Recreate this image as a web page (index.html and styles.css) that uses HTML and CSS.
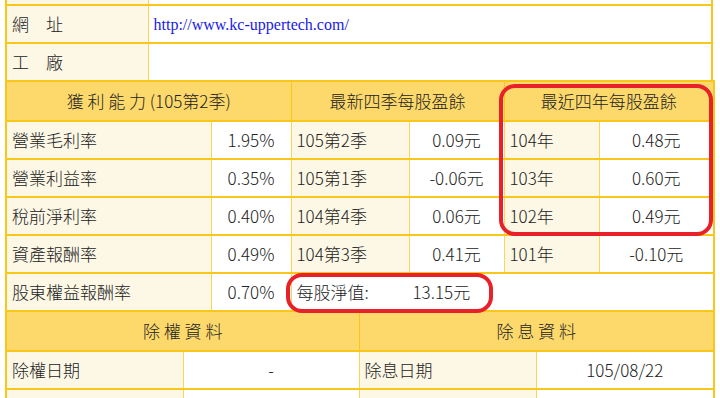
FILE: index.html
```html
<!DOCTYPE html>
<html lang="zh-Hant">
<head>
<meta charset="utf-8">
<title>公司資料</title>
<link rel="stylesheet" href="styles.css">
</head>
<body>
<div class="sheet">
  <table class="info">
    <colgroup><col class="c-lab"><col></colgroup>
    <tr class="stub"><td class="lab"></td><td class="val"></td></tr>
    <tr><td class="lab">網　址</td><td class="val"><span class="url">http://www.kc-uppertech.com/</span></td></tr>
    <tr><td class="lab">工　廠</td><td class="val"></td></tr>
  </table>

  <table class="fin">
    <colgroup>
      <col style="width:205px"><col style="width:80px"><col style="width:118px">
      <col style="width:95px"><col style="width:95px"><col style="width:115px">
    </colgroup>
    <tr class="head">
      <td colspan="2">獲 利 能 力 (105第2季)</td>
      <td colspan="2">最新四季每股盈餘</td>
      <td colspan="2">最近四年每股盈餘</td>
    </tr>
    <tr>
      <td class="lab">營業毛利率</td><td class="num">1.95%</td>
      <td class="lab">105第2季</td><td class="num">0.09元</td>
      <td class="lab">104年</td><td class="num">0.48元</td>
    </tr>
    <tr>
      <td class="lab">營業利益率</td><td class="num">0.35%</td>
      <td class="lab">105第1季</td><td class="num">-0.06元</td>
      <td class="lab">103年</td><td class="num">0.60元</td>
    </tr>
    <tr>
      <td class="lab">稅前淨利率</td><td class="num">0.40%</td>
      <td class="lab">104第4季</td><td class="num">0.06元</td>
      <td class="lab">102年</td><td class="num">0.49元</td>
    </tr>
    <tr>
      <td class="lab">資產報酬率</td><td class="num">0.49%</td>
      <td class="lab">104第3季</td><td class="num">0.41元</td>
      <td class="lab">101年</td><td class="num">-0.10元</td>
    </tr>
    <tr>
      <td class="lab">股東權益報酬率</td><td class="num">0.70%</td>
      <td class="plain" colspan="4"><span class="nav-label">每股淨值:</span><span class="nav-value">13.15元</span></td>
    </tr>
  </table>

  <table class="div">
    <colgroup>
      <col style="width:177px"><col style="width:176px"><col style="width:177px"><col style="width:178px">
    </colgroup>
    <tr class="head">
      <td colspan="2">除 權 資 料</td>
      <td colspan="2">除 息 資 料</td>
    </tr>
    <tr>
      <td class="lab">除權日期</td><td class="num">-</td>
      <td class="lab">除息日期</td><td class="num">105/08/22</td>
    </tr>
    <tr>
      <td class="lab">&nbsp;</td><td class="num">&nbsp;</td>
      <td class="lab">&nbsp;</td><td class="num">&nbsp;</td>
    </tr>
  </table>

  <div class="mark mark-years"></div>
  <div class="mark mark-nav"></div>
</div>
</body>
</html>
```

FILE: styles.css
```css
html, body {
  margin: 0;
  padding: 0;
  background: #ffffff;
}

body {
  font-family: "Noto Sans CJK TC", "Noto Sans", sans-serif;
  color: #222222;
  overflow: hidden;
}

.sheet {
  position: relative;
  width: 708px;
  margin-left: 5px;
}

table {
  width: 708px;
  border-collapse: collapse;
  table-layout: fixed;
  margin-top: -2px;
}

table.info {
  margin-top: 0;
}

td {
  border-left: 1px solid #fcd45a;
  border-right: 1px solid #fcd45a;
  border-top: 2px solid #f9c61a;
  border-bottom: 2px solid #f9c61a;
  height: 36px;
  padding: 0 5px;
  font-size: 17px;
  font-weight: 300;
  line-height: 20px;
  white-space: nowrap;
  overflow: hidden;
}

td:first-child {
  border-left: 2px solid #f9c61a;
}

td:last-child {
  border-right: 2px solid #f9c61a;
}

.c-lab {
  width: 142px;
}

.stub td {
  height: 4px;
  line-height: 0;
  padding: 0;
  border-top: none;
}

.lab {
  background: #fdf8e6;
  text-align: left;
}

.val,
.num,
.plain {
  background: #ffffff;
}

.num {
  text-align: center;
}

.url {
  font-family: "Liberation Serif", serif;
  font-size: 16px;
  color: #1a1ae6;
}

.head td {
  background: #fdd96c;
  height: 38px;
  text-align: center;
  border-left-color: #f9c61a;
  border-right-color: #f9c61a;
}

.plain {
  text-align: left;
}

.nav-label {
  display: inline-block;
  width: 116px;
}

.mark {
  position: absolute;
  border: 4px solid #e8202a;
  border-radius: 16px;
  box-sizing: border-box;
}

.mark-years {
  left: 494px;
  top: 84px;
  width: 214px;
  height: 152px;
}

.mark-nav {
  left: 281px;
  top: 273px;
  width: 207px;
  height: 40px;
}
```
